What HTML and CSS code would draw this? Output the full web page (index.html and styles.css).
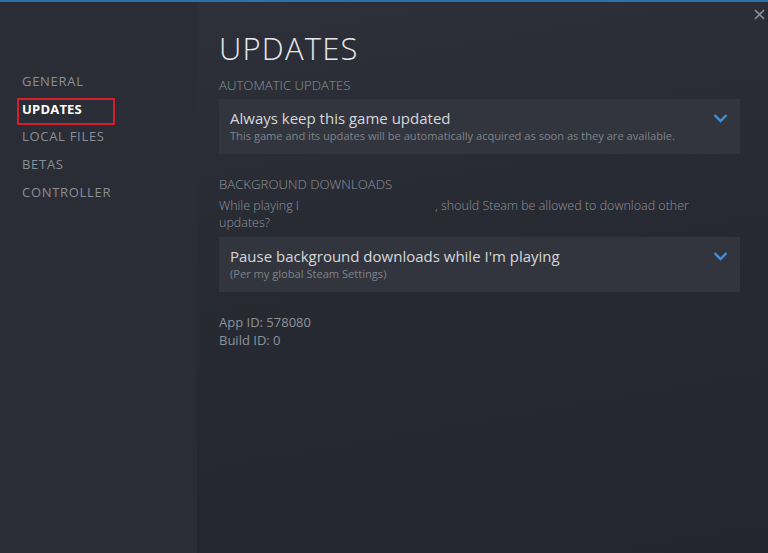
FILE: index.html
```html
<!DOCTYPE html>
<html lang="en">

<head>
    <meta charset="UTF-8">
    <meta name="viewport" content="width=device-width, initial-scale=1.0">
    <title>Properties - Updates</title>
    <link rel="stylesheet" href="styles.css">
</head>

<body>
    <div class="top-line"></div>

    <div class="window">
        <div class="side">
            <div class="side-item">GENERAL</div>
            <div class="side-item active">UPDATES</div>
            <div class="side-item">LOCAL FILES</div>
            <div class="side-item">BETAS</div>
            <div class="side-item">CONTROLLER</div>
        </div>

        <div class="main">
            <svg class="close" width="11" height="11" viewBox="0 0 11 11">
                <path d="M1 1 L10 10 M10 1 L1 10" stroke="#8d9096" stroke-width="1.6" fill="none" />
            </svg>

            <h1 class="title">UPDATES</h1>

            <p class="label">AUTOMATIC UPDATES</p>
            <div class="dropdown">
                <div class="dropdown-text">
                    <div class="dropdown-title">Always keep this game updated</div>
                    <div class="dropdown-sub">This game and its updates will be automatically acquired as soon as they are available.</div>
                </div>
                <svg class="chevron" width="15" height="10" viewBox="0 0 15 10">
                    <path d="M1.5 2 L7.5 8 L13.5 2" stroke="#3f8fdc" stroke-width="2.4" fill="none" />
                </svg>
            </div>

            <p class="label label-second">BACKGROUND DOWNLOADS</p>
            <div class="text">
                <div class="text-line"><span>While playing I</span><span class="gap"></span><span>, should Steam be allowed to download other</span></div>
                <div class="text-line">updates?</div>
            </div>
            <div class="dropdown">
                <div class="dropdown-text">
                    <div class="dropdown-title">Pause background downloads while I'm playing</div>
                    <div class="dropdown-sub">(Per my global Steam Settings)</div>
                </div>
                <svg class="chevron" width="15" height="10" viewBox="0 0 15 10">
                    <path d="M1.5 2 L7.5 8 L13.5 2" stroke="#3f8fdc" stroke-width="2.4" fill="none" />
                </svg>
            </div>

            <div class="ids">
                <p>App ID: 578080</p>
                <p>Build ID: 0</p>
            </div>
        </div>
    </div>
</body>

</html>
```

FILE: styles.css
```css
body {
    margin: 0;
    width: 768px;
    height: 553px;
    overflow: hidden;
    background-color: #242730;
    font-family: "Open Sans", "Noto Sans", sans-serif;
}

p {
    margin: 0;
}

.top-line {
    height: 2px;
    background-color: #2f6fa9;
}

.window {
    display: flex;
    height: 551px;
}

.side {
    width: 197px;
    padding-top: 68px;
    background-color: #2a2d35;
    box-sizing: border-box;
}

.side-item {
    width: 98px;
    height: 27px;
    margin-left: 17px;
    margin-bottom: 0.7px;
    padding: 0 0 4px 3px;
    border: 2px solid transparent;
    box-sizing: border-box;
    line-height: 19px;
    font-size: 13px;
    letter-spacing: 0.7px;
    color: #8a8f97;
}

.side-item.active {
    border-color: #d11f2d;
    color: #ffffff;
    font-weight: 700;
    letter-spacing: 0.2px;
}

.main {
    flex: 1;
    position: relative;
    padding: 28px 28px 0 22px;
    background: linear-gradient(170deg, #2d3039 0%, #272a33 45%, #23262f 100%);
}

.close {
    position: absolute;
    top: 7px;
    right: 3px;
}

.title {
    margin: 0 0 11px 0;
    height: 36px;
    line-height: 36px;
    font-size: 31px;
    font-weight: 300;
    letter-spacing: 1.2px;
    color: #e6e7e9;
}

.label {
    height: 16px;
    line-height: 16px;
    margin-bottom: 6px;
    font-size: 13.2px;
    font-weight: 300;
    color: #8e939b;
}

.label-second {
    margin-top: 21.5px;
    margin-bottom: 5px;
}

.text {
    line-height: 17px;
    font-size: 12.5px;
    font-weight: 300;
    color: #8e939b;
    margin-bottom: 6px;
}

.text-line {
    white-space: nowrap;
}

/* the game name is blanked out in the original, keep the empty space */
.gap {
    display: inline-block;
    width: 136px;
}

.dropdown {
    display: flex;
    justify-content: space-between;
    height: 55px;
    padding: 10px 12px 0 11px;
    box-sizing: border-box;
    background-color: #32353e;
}

.dropdown-title {
    line-height: 19px;
    font-size: 15px;
    font-weight: 500;
    color: #d6d8db;
}

.dropdown-sub {
    line-height: 15px;
    font-size: 11.1px;
    color: #7e838b;
}

.chevron {
    margin-top: 4px;
}

.ids {
    margin-top: 21px;
    font-size: 13px;
    line-height: 18.5px;
    color: #8e939b;
}
```
